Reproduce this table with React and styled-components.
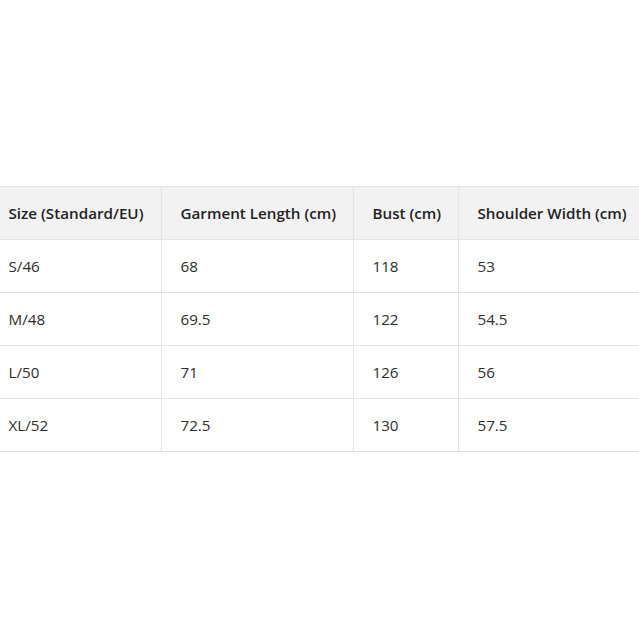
import React from "react";
import styled, { createGlobalStyle } from "styled-components";

const GlobalStyle = createGlobalStyle`
  html, body {
    margin: 0;
    padding: 0;
    background: #ffffff;
  }
  body {
    font-family: "Open Sans", "Noto Sans", sans-serif;
    color: #333333;
  }
`;

// page centers the table both ways
const Page = styled.main`
  display: flex;
  align-items: center;
  justify-content: center;
  height: 100vh;
  width: 100vw;
  overflow: hidden;
`;

const Table = styled.table`
  border-collapse: collapse;
  table-layout: fixed;
  width: 661px;
  flex-shrink: 0;
  font-size: 15.2px;
  margin-bottom: 2px;
`;

const HeadCell = styled.th`
  background: #f2f2f2;
  font-weight: 600;
  color: #222222;
  text-align: left;
  padding: 0 0 0 19px;
  height: 52px;
  border: 1px solid #e3e3e3;
  white-space: nowrap;
  overflow: hidden;
`;

const Cell = styled.td`
  padding: 0 0 0 19px;
  height: 52px;
  border: 1px solid #e3e3e3;
  color: #2e2e2e;
  white-space: nowrap;
`;

const columns = [
  { label: "Size (Standard/EU)", w: 172 },
  { label: "Garment Length (cm)", w: 192 },
  { label: "Bust (cm)", w: 105 },
  { label: "Shoulder Width (cm)", w: 192 },
];

const rows = [
  ["S/46", "68", "118", "53"],
  ["M/48", "69.5", "122", "54.5"],
  ["L/50", "71", "126", "56"],
  ["XL/52", "72.5", "130", "57.5"],
];

function App() {
  return (
    <Page>
      <GlobalStyle />
      <Table>
        <colgroup>
          {columns.map((c) => (
            <col key={c.label} style={{ width: c.w }} />
          ))}
        </colgroup>
        <thead>
          <tr>
            {columns.map((c) => (
              <HeadCell key={c.label}>{c.label}</HeadCell>
            ))}
          </tr>
        </thead>
        <tbody>
          {rows.map((r) => (
            <tr key={r[0]}>
              {r.map((v, i) => (
                <Cell key={i}>{v}</Cell>
              ))}
            </tr>
          ))}
        </tbody>
      </Table>
    </Page>
  );
}

export default App;
